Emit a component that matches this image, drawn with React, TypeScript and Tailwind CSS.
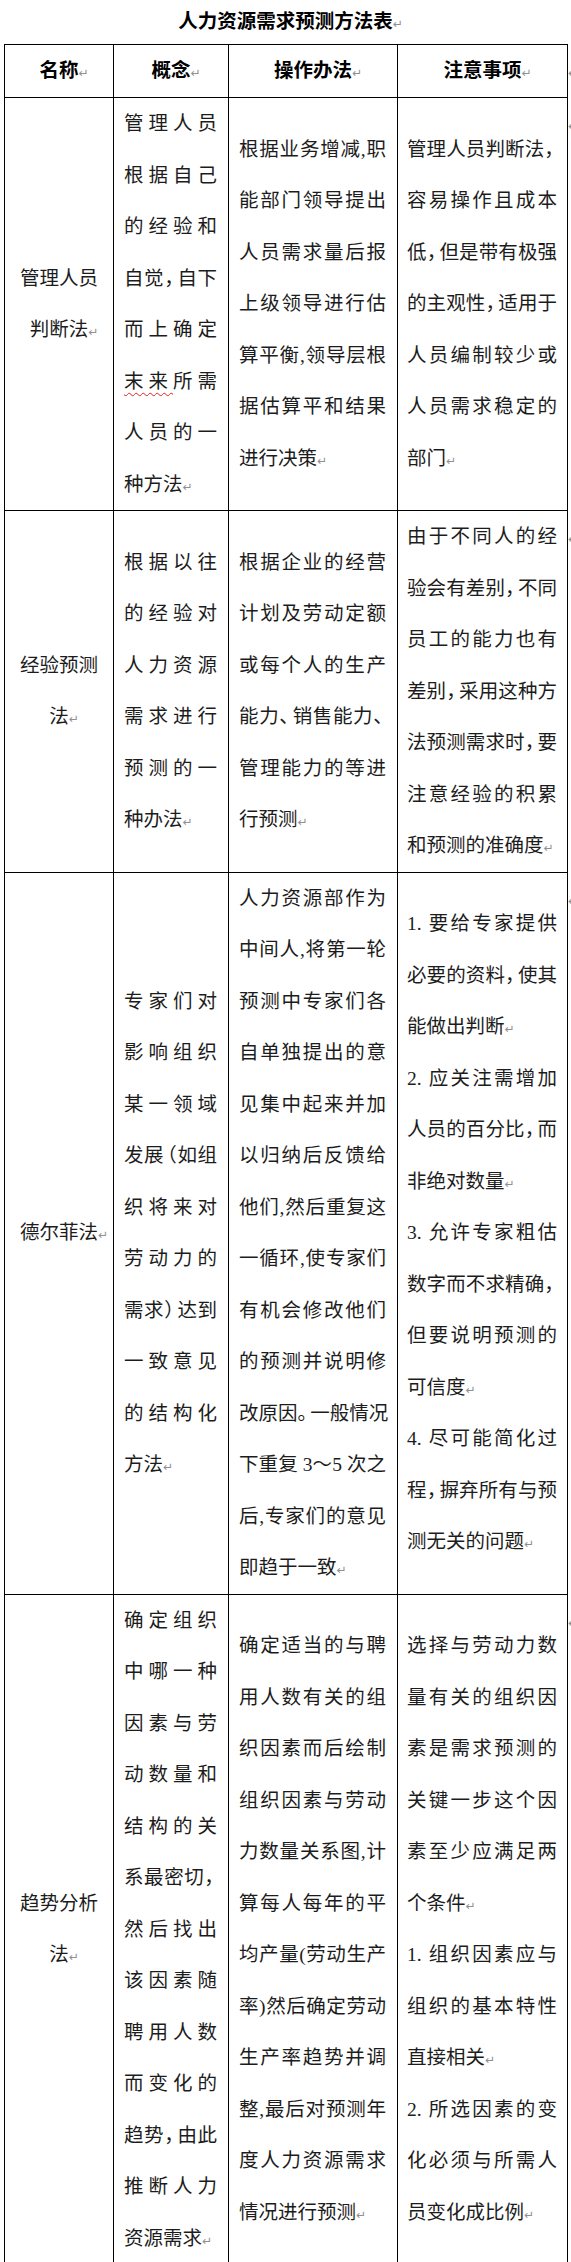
import React from "react";

type Para = string[];
type Row = { name: string[]; cols: Para[][] };

const rows: Row[] = [
  {
    name: ["管理人员", "判断法"],
    cols: [
      [["管理人员", "根据自己", "的经验和", "自觉，自下", "而上确定", "末来所需", "人员的一", "种方法"]],
      [["根据业务增减,职", "能部门领导提出", "人员需求量后报", "上级领导进行估", "算平衡,领导层根", "据估算平和结果", "进行决策"]],
      [["管理人员判断法，", "容易操作且成本", "低，但是带有极强", "的主观性，适用于", "人员编制较少或", "人员需求稳定的", "部门"]],
    ],
  },
  {
    name: ["经验预测", "法"],
    cols: [
      [["根据以往", "的经验对", "人力资源", "需求进行", "预测的一", "种办法"]],
      [["根据企业的经营", "计划及劳动定额", "或每个人的生产", "能力、销售能力、", "管理能力的等进", "行预测"]],
      [["由于不同人的经", "验会有差别，不同", "员工的能力也有", "差别，采用这种方", "法预测需求时，要", "注意经验的积累", "和预测的准确度"]],
    ],
  },
  {
    name: ["德尔菲法"],
    cols: [
      [["专家们对", "影响组织", "某一领域", "发展（如组", "织将来对", "劳动力的", "需求）达到", "一致意见", "的结构化", "方法"]],
      [[
        "人力资源部作为",
        "中间人,将第一轮",
        "预测中专家们各",
        "自单独提出的意",
        "见集中起来并加",
        "以归纳后反馈给",
        "他们,然后重复这",
        "一循环,使专家们",
        "有机会修改他们",
        "的预测并说明修",
        "改原因。一般情况",
        "下重复 3～5 次之",
        "后,专家们的意见",
        "即趋于一致",
      ]],
      [
        ["1. 要给专家提供", "必要的资料，使其", "能做出判断"],
        ["2. 应关注需增加", "人员的百分比，而", "非绝对数量"],
        ["3. 允许专家粗估", "数字而不求精确，", "但要说明预测的", "可信度"],
        ["4. 尽可能简化过", "程，摒弃所有与预", "测无关的问题"],
      ],
    ],
  },
  {
    name: ["趋势分析", "法"],
    cols: [
      [[
        "确定组织",
        "中哪一种",
        "因素与劳",
        "动数量和",
        "结构的关",
        "系最密切，",
        "然后找出",
        "该因素随",
        "聘用人数",
        "而变化的",
        "趋势，由此",
        "推断人力",
        "资源需求",
      ]],
      [[
        "确定适当的与聘",
        "用人数有关的组",
        "织因素而后绘制",
        "组织因素与劳动",
        "力数量关系图,计",
        "算每人每年的平",
        "均产量(劳动生产",
        "率)然后确定劳动",
        "生产率趋势并调",
        "整,最后对预测年",
        "度人力资源需求",
        "情况进行预测",
      ]],
      [
        ["选择与劳动力数", "量有关的组织因", "素是需求预测的", "关键一步这个因", "素至少应满足两", "个条件"],
        ["1. 组织因素应与", "组织的基本特性", "直接相关"],
        ["2. 所选因素的变", "化必须与所需人", "员变化成比例"],
      ],
    ],
  },
];

const Mark = () => (
  <span className="font-['DejaVu_Sans',sans-serif] text-[12px] font-normal text-[#8f8f8f]">↵</span>
);

// a return mark that does not move centred text
const FloatMark = () => (
  <span className="inline-block w-0 whitespace-nowrap text-left">
    <Mark />
  </span>
);

const TIGHT_AFTER = "，。、）";
const TIGHT_BEFORE = "（";

function renderText(text: string) {
  const out: React.ReactNode[] = [];
  let buf = "";
  const flush = () => {
    if (buf) out.push(buf);
    buf = "";
  };
  for (let i = 0; i < text.length; i++) {
    const c = text[i];
    if (text.startsWith("末来", i)) {
      flush();
      out.push(
        <span key={i} className="underline decoration-wavy decoration-[#e02020] decoration-1 underline-offset-[4px]">
          末来
        </span>
      );
      i++;
    } else if (TIGHT_AFTER.includes(c)) {
      flush();
      out.push(
        <span key={i} className="mr-[-0.35em]">
          {c}
        </span>
      );
    } else if (TIGHT_BEFORE.includes(c)) {
      flush();
      out.push(
        <span key={i} className="ml-[-0.35em]">
          {c}
        </span>
      );
    } else {
      buf += c;
    }
  }
  flush();
  return out;
}

function Cell({ paras }: { paras: Para[] }) {
  return (
    <div>
      {paras.map((p, pi) =>
        p.map((line, li) => {
          const last = li === p.length - 1;
          return (
            <div
              key={`${pi}-${li}`}
              className={`h-[51.5px] whitespace-nowrap leading-[51.5px] ${
                last ? "text-left" : "text-justify [text-align-last:justify]"
              }`}
            >
              {renderText(line)}
              {last && <Mark />}
            </div>
          );
        })
      )}
    </div>
  );
}

const td = "border border-black p-0 align-middle";

export default function App() {
  return (
    <div className="relative min-h-[2262px] w-[571px] overflow-hidden bg-white font-['Liberation_Serif','Noto_Sans_CJK_SC',sans-serif] text-[19.5px] text-[#1c1c1c]">
      <div className="flex h-[44px] items-center justify-center text-[19.5px] font-bold text-black">
        <span>
          人力资源需求预测方法表
          <FloatMark />
        </span>
      </div>

      <table className="ml-[4px] w-[563px] table-fixed border-collapse">
        <colgroup>
          <col className="w-[109px]" />
          <col className="w-[115px]" />
          <col className="w-[169px]" />
          <col className="w-[170px]" />
        </colgroup>
        <thead>
          <tr className="h-[53px]">
            {["名称", "概念", "操作办法", "注意事项"].map((h, i) => (
              <th key={h} className={`${td} relative text-center font-bold text-black`}>
                {h}
                <FloatMark />
                {i === 3 && (
                  <span className="absolute left-[calc(100%+1px)] top-0 leading-[52px]">
                    <Mark />
                  </span>
                )}
              </th>
            ))}
          </tr>
        </thead>
        <tbody>
          {rows.map((r, ri) => (
            <tr key={ri}>
              <td className={`${td} text-center`}>
                {r.name.map((n, ni) => (
                  <div key={ni} className="h-[51.5px] leading-[51.5px]">
                    {n}
                    {ni === r.name.length - 1 && <FloatMark />}
                  </div>
                ))}
              </td>
              {r.cols.map((paras, ci) => (
                <td
                  key={ci}
                  className={`${td} ${ci === 2 ? "relative pl-[9px] pr-[10px]" : "pl-[10px] pr-[11px]"}`}
                >
                  <Cell paras={paras} />
                  {ci === 2 && (
                    <span className="absolute left-[calc(100%+1px)] top-0 leading-[51.5px]">
                      <Mark />
                    </span>
                  )}
                </td>
              ))}
            </tr>
          ))}
        </tbody>
      </table>
    </div>
  );
}
